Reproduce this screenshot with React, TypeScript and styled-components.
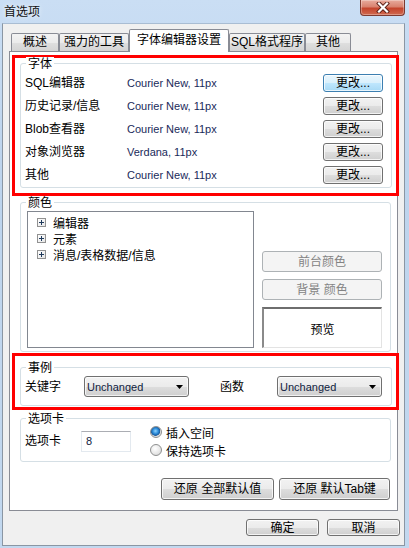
import React from "react";
import styled, { createGlobalStyle, css } from "styled-components";

const Global = createGlobalStyle`
  html, body { margin: 0; padding: 0; background: #bcd3ec; }
  body {
    font-family: "Liberation Sans", "Noto Sans CJK SC", sans-serif;
    font-size: 12px;
    color: #000;
  }
  * { box-sizing: border-box; }
`;

const Window = styled.div`
  width: 409px;
  height: 548px;
  display: flex;
  flex-direction: column;
  background: linear-gradient(180deg, #cadef4 0%, #bdd4ed 30%, #c2d8ef 100%);
  overflow: hidden;
`;

const TitleBar = styled.div`
  height: 23px;
  flex: none;
  display: flex;
  align-items: flex-start;
`;

const Title = styled.div`
  padding-left: 4px;
  margin-top: 3px;
  line-height: 15px;
  font-size: 12px;
  font-family: "Noto Sans CJK SC", sans-serif;
  color: #111;
  text-shadow: 0 0 5px rgba(255, 255, 255, 0.95);
`;

const CloseButton = styled.div`
  margin-left: auto;
  margin-right: 4px;
  width: 45px;
  height: 16px;
  border: 1px solid #7d3a30;
  border-top: none;
  border-radius: 0 0 4px 4px;
  background: linear-gradient(180deg, #e8ab9d 0%, #d9826f 45%, #c4442c 55%, #d06a50 100%);
  box-shadow: inset 0 0 0 1px rgba(255, 255, 255, 0.3);
  display: flex;
  align-items: center;
  justify-content: center;
`;

const Client = styled.div`
  margin-left: 2px;
  width: 403px;
  height: 523px;
  flex: none;
  border: 1px solid #8a96a3;
  border-top-color: #a9bdd3;
  background: #f0f0f0;
  display: flex;
  flex-direction: column;
`;

const TabStrip = styled.div`
  margin-top: 5px;
  height: 22px;
  padding-left: 8px;
  display: flex;
  align-items: flex-end;
  flex: none;
`;

const Tab = styled.div<{ $active?: boolean; $w: number }>`
  width: ${(p) => p.$w}px;
  border: 1px solid #898c95;
  border-bottom: none;
  border-radius: 2px 2px 0 0;
  text-align: center;
  font-size: 12px;
  white-space: nowrap;
  ${(p) =>
    p.$active
      ? css`
          height: 23px;
          margin-bottom: -1px;
          line-height: 21px;
          background: #fff;
          position: relative;
          z-index: 1;
        `
      : css`
          height: 18px;
          line-height: 17px;
          background: linear-gradient(180deg, #f3f3f3 0%, #ebebeb 50%, #dedede 55%, #d4d4d4 100%);
        `}
`;

const Panel = styled.div`
  margin-left: 6px;
  width: 389px;
  height: 460px;
  flex: none;
  border: 1px solid #898c95;
  background: #fff;
  display: flex;
  flex-direction: column;
`;

const RedBox = styled.div<{ $pad: string; $mt: number }>`
  margin-left: 2px;
  margin-top: ${(p) => p.$mt}px;
  width: 387px;
  flex: none;
  border: 3px solid #ff0000;
  padding: ${(p) => p.$pad};
`;

const GroupBox = styled.div<{ $pad: string; $mt?: number; $ml?: number }>`
  position: relative;
  flex: none;
  margin-top: ${(p) => p.$mt ?? 0}px;
  margin-left: ${(p) => p.$ml ?? 0}px;
  width: ${(p) => (p.$ml ? "371px" : "auto")};
  border: 1px solid #d5dfe5;
  border-radius: 3px;
  padding: ${(p) => p.$pad};
`;

const Legend = styled.span`
  position: absolute;
  top: -7px;
  left: 5px;
  padding: 0 2px;
  background: #fff;
  line-height: 15px;
  font-size: 12px;
`;

const FontGrid = styled.div`
  display: grid;
  grid-template-columns: 102px 1fr 60px;
  grid-auto-rows: 18px;
  row-gap: 5px;
  align-items: center;
`;

const Label = styled.span<{ $w?: number; $ml?: number }>`
  font-size: 12px;
  line-height: 16px;
  white-space: nowrap;
  flex: none;
  ${(p) => p.$w !== undefined && `width: ${p.$w}px;`}
  ${(p) => p.$ml !== undefined && `margin-left: ${p.$ml}px;`}
`;

const FontName = styled.span`
  font-size: 11px;
  color: #1a2a5a;
  line-height: 16px;
  white-space: nowrap;
`;

const Button = styled.button<{ $primary?: boolean; $w?: number; $h: number }>`
  width: ${(p) => (p.$w ? `${p.$w}px` : "100%")};
  height: ${(p) => p.$h}px;
  padding: 0;
  margin: 0;
  flex: none;
  font-family: "Liberation Sans", "Noto Sans CJK SC", sans-serif;
  font-size: 12px;
  line-height: 14px;
  color: #000;
  border-radius: 3px;
  border: 1px solid ${(p) => (p.$primary ? "#3c7fb1" : "#707070")};
  background: ${(p) =>
    p.$primary
      ? "linear-gradient(180deg, #eaf6fd 0%, #d9f0fc 50%, #bee6fd 52%, #a7d9f5 100%)"
      : "linear-gradient(180deg, #f2f2f2 0%, #ebebeb 50%, #dddddd 52%, #cfcfcf 100%)"};
  box-shadow: inset 0 0 0 1px rgba(255, 255, 255, 0.75);
  white-space: nowrap;
  &:disabled {
    border-color: #adb2b5;
    background: #f4f4f4;
    color: #838383;
    box-shadow: none;
  }
`;

const ColorRow = styled.div`
  display: flex;
  gap: 8px;
`;

const Tree = styled.div`
  width: 227px;
  height: 137px;
  flex: none;
  border: 1px solid #828790;
  background: #fff;
  padding: 2px 0 0 9px;
  display: flex;
  flex-direction: column;
`;

const TreeItem = styled.div`
  height: 16px;
  display: flex;
  align-items: center;
  gap: 7px;
  font-size: 12px;
  white-space: nowrap;
`;

const PlusBox = styled.span`
  width: 9px;
  height: 9px;
  flex: none;
  border: 1px solid #919191;
  background: linear-gradient(135deg, #ffffff 0%, #e6e6e6 100%);
  position: relative;
  &::before {
    content: "";
    position: absolute;
    left: 1px;
    top: 3px;
    width: 5px;
    height: 1px;
    background: #1e395b;
  }
  &::after {
    content: "";
    position: absolute;
    left: 3px;
    top: 1px;
    width: 1px;
    height: 5px;
    background: #1e395b;
  }
`;

const RightCol = styled.div`
  width: 120px;
  flex: none;
  display: flex;
  flex-direction: column;
  justify-content: flex-end;
  gap: 7px;
`;

const Preview = styled.div`
  height: 41px;
  border-top: 2px solid #6e6e6e;
  border-left: 2px solid #8a8a8a;
  border-right: 1px solid #e3e3e3;
  border-bottom: 1px solid #e3e3e3;
  background: #fff;
  display: flex;
  align-items: center;
  justify-content: center;
  font-size: 12px;
`;

const InlineRow = styled.div`
  display: flex;
  align-items: center;
`;

const Select = styled.div`
  width: 105px;
  height: 21px;
  flex: none;
  border: 1px solid #707070;
  border-radius: 3px;
  background: linear-gradient(180deg, #f2f2f2 0%, #ebebeb 50%, #dddddd 52%, #cfcfcf 100%);
  box-shadow: inset 0 0 0 1px rgba(255, 255, 255, 0.7);
  display: flex;
  align-items: center;
  padding-left: 2px;
  font-size: 11px;
  color: #101c40;
`;

const Arrow = styled.svg`
  margin-left: auto;
  margin-right: 5px;
`;

const TextInput = styled.div`
  width: 50px;
  height: 21px;
  flex: none;
  border: 1px solid #e3e9ef;
  border-top-color: #abadb3;
  background: #fff;
  padding-left: 4px;
  font-size: 11px;
  line-height: 19px;
  color: #101c40;
`;

const RadioGroup = styled.div`
  margin-left: 19px;
  display: flex;
  flex-direction: column;
`;

const RadioRow = styled.div`
  height: 18px;
  display: flex;
  align-items: center;
  gap: 4px;
  font-size: 12px;
`;

const RadioDot = styled.span<{ $checked?: boolean }>`
  width: 12px;
  height: 12px;
  flex: none;
  border-radius: 50%;
  border: 1px solid #8e8f8f;
  background: ${(p) =>
    p.$checked
      ? "radial-gradient(circle at 45% 40%, #8fd3ff 0%, #2a8ad8 35%, #1b5a9c 55%, #dcdcdc 62%, #f4f4f4 100%)"
      : "radial-gradient(circle at 40% 35%, #ffffff 0%, #e8e8e8 55%, #cfcfcf 100%)"};
`;

const ButtonRow = styled.div<{ $mt: number; $gap: number; $pr: number }>`
  margin-top: ${(p) => p.$mt}px;
  display: flex;
  justify-content: flex-end;
  gap: ${(p) => p.$gap}px;
  padding-right: ${(p) => p.$pr}px;
  flex: none;
`;

const fonts = [
  ["SQL编辑器", "Courier New, 11px"],
  ["历史记录/信息", "Courier New, 11px"],
  ["Blob查看器", "Courier New, 11px"],
  ["对象浏览器", "Verdana, 11px"],
  ["其他", "Courier New, 11px"],
];

export default function App() {
  return (
    <>
      <Global />
      <Window>
        <TitleBar>
          <Title>首选项</Title>
          <CloseButton>
            <svg width="14" height="11" viewBox="0 0 14 11">
              <path d="M3 1.5 L11 9.5 M11 1.5 L3 9.5" stroke="#5a1f16" strokeWidth="4" strokeLinecap="square" />
              <path d="M3 1.5 L11 9.5 M11 1.5 L3 9.5" stroke="#ffffff" strokeWidth="2.2" strokeLinecap="square" />
            </svg>
          </CloseButton>
        </TitleBar>
        <Client>
          <TabStrip>
            <Tab $w={48}>概述</Tab>
            <Tab $w={70}>强力的工具</Tab>
            <Tab $w={100} $active>
              字体编辑器设置
            </Tab>
            <Tab $w={76}>SQL格式程序</Tab>
            <Tab $w={46}>其他</Tab>
          </TabStrip>
          <Panel>
            <RedBox $mt={3} $pad="5px 4px 5px 5px">
              <GroupBox $pad="10px 8px 3px 4px">
                <Legend>字体</Legend>
                <FontGrid>
                  {fonts.map(([label, font], i) => (
                    <React.Fragment key={label}>
                      <Label>{label}</Label>
                      <FontName>{font}</FontName>
                      <Button $primary={i === 0} $h={18}>
                        更改...
                      </Button>
                    </React.Fragment>
                  ))}
                </FontGrid>
              </GroupBox>
            </RedBox>

            <GroupBox $mt={6} $ml={10} $pad="8px 8px 3px 6px">
              <Legend>颜色</Legend>
              <ColorRow>
                <Tree>
                  <TreeItem>
                    <PlusBox />
                    编辑器
                  </TreeItem>
                  <TreeItem>
                    <PlusBox />
                    元素
                  </TreeItem>
                  <TreeItem>
                    <PlusBox />
                    消息/表格数据/信息
                  </TreeItem>
                </Tree>
                <RightCol>
                  <Button $h={21} disabled>
                    前台颜色
                  </Button>
                  <Button $h={21} disabled>
                    背景 颜色
                  </Button>
                  <Preview>预览</Preview>
                </RightCol>
              </ColorRow>
            </GroupBox>

            <RedBox $mt={1} $pad="11px 4px 1px 5px">
              <GroupBox $pad="8px 9px 8px 4px">
                <Legend>事例</Legend>
                <InlineRow>
                  <Label $w={59}>关键字</Label>
                  <Select>
                    Unchanged
                    <Arrow width="7" height="4" viewBox="0 0 7 4">
                      <path d="M0 0 H7 L3.5 4 Z" fill="#000" />
                    </Arrow>
                  </Select>
                  <Label $w={57} $ml={31}>
                    函数
                  </Label>
                  <Select>
                    Unchanged
                    <Arrow width="7" height="4" viewBox="0 0 7 4">
                      <path d="M0 0 H7 L3.5 4 Z" fill="#000" />
                    </Arrow>
                  </Select>
                </InlineRow>
              </GroupBox>
            </RedBox>

            <GroupBox $mt={8} $ml={10} $pad="4px 0 2px 4px">
              <Legend>选项卡</Legend>
              <InlineRow>
                <Label $w={56}>选项卡</Label>
                <TextInput>8</TextInput>
                <RadioGroup>
                  <RadioRow>
                    <RadioDot $checked />
                    插入空间
                  </RadioRow>
                  <RadioRow>
                    <RadioDot />
                    保持选项卡
                  </RadioRow>
                </RadioGroup>
              </InlineRow>
            </GroupBox>

            <ButtonRow $mt={16} $gap={5} $pr={7}>
              <Button $w={113} $h={22}>
                还原 全部默认值
              </Button>
              <Button $w={111} $h={22}>
                还原 默认Tab键
              </Button>
            </ButtonRow>
          </Panel>
          <ButtonRow $mt={8} $gap={8} $pr={4}>
            <Button $w={73} $h={17}>
              确定
            </Button>
            <Button $w={73} $h={17}>
              取消
            </Button>
          </ButtonRow>
        </Client>
      </Window>
    </>
  );
}
